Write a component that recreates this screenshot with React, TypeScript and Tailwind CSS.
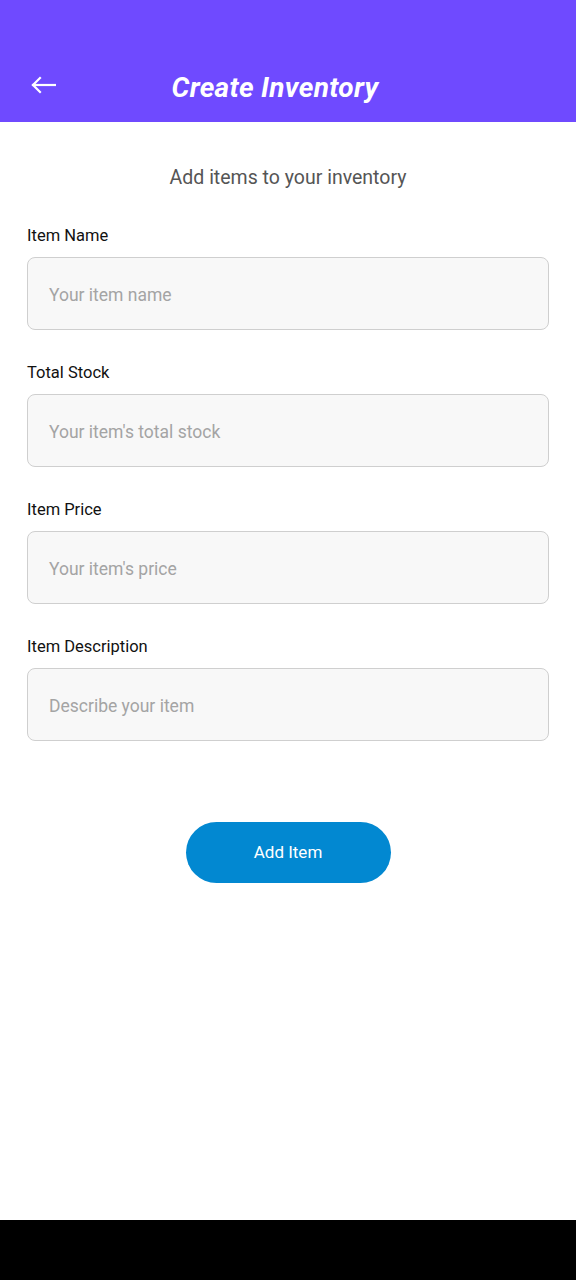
import React from "react";

const fields = [
  { label: "Item Name", placeholder: "Your item name" },
  { label: "Total Stock", placeholder: "Your item's total stock" },
  { label: "Item Price", placeholder: "Your item's price" },
  { label: "Item Description", placeholder: "Describe your item" },
];

export default function App() {
  return (
    <div className="w-[576px] h-[1280px] flex flex-col bg-white font-['Roboto',sans-serif]">
      {/* Header */}
      <div className="h-[122px] bg-[#6f4aff] flex items-end pb-[14px] px-[30px]">
        <div className="flex items-center w-full h-[40px]">
          <svg width="26" height="18" viewBox="0 0 26 18" fill="none" stroke="white" strokeWidth="2.2" strokeLinecap="square" className="-mt-[6px]">
            <path d="M3 9 H25" />
            <path d="M10 2 L3 9 L10 16" />
          </svg>
          <h1 className="flex-1 text-center pr-[52px] text-white text-[28px] font-bold italic tracking-[0.3px]">
            Create Inventory
          </h1>
        </div>
      </div>

      {/* Body */}
      <div className="flex-1 flex flex-col px-[27px]">
        <p className="mt-[44px] text-center text-[19.5px] text-[#555555] leading-[24px]">Add items to your inventory</p>

        <div className="mt-[34px] flex flex-col gap-[31px]">
          {fields.map((f) => (
            <div key={f.label} className="flex flex-col">
              <label className="text-[16.5px] text-[#111111] leading-[24px]">{f.label}</label>
              <div className="mt-[9px] h-[73px] rounded-[8px] border border-[#cfcfcf] bg-[#f8f8f8] flex items-center px-[21px] pt-[3px]">
                <span className="text-[17.5px] text-[#a4a4a4]">{f.placeholder}</span>
              </div>
            </div>
          ))}
        </div>

        <div className="mt-[81px] flex justify-center">
          <button className="w-[205px] h-[61px] rounded-full bg-[#0288d1] text-white text-[17px]">
            Add Item
          </button>
        </div>
      </div>

      {/* System nav bar */}
      <div className="h-[60px] bg-black" />
    </div>
  );
}
